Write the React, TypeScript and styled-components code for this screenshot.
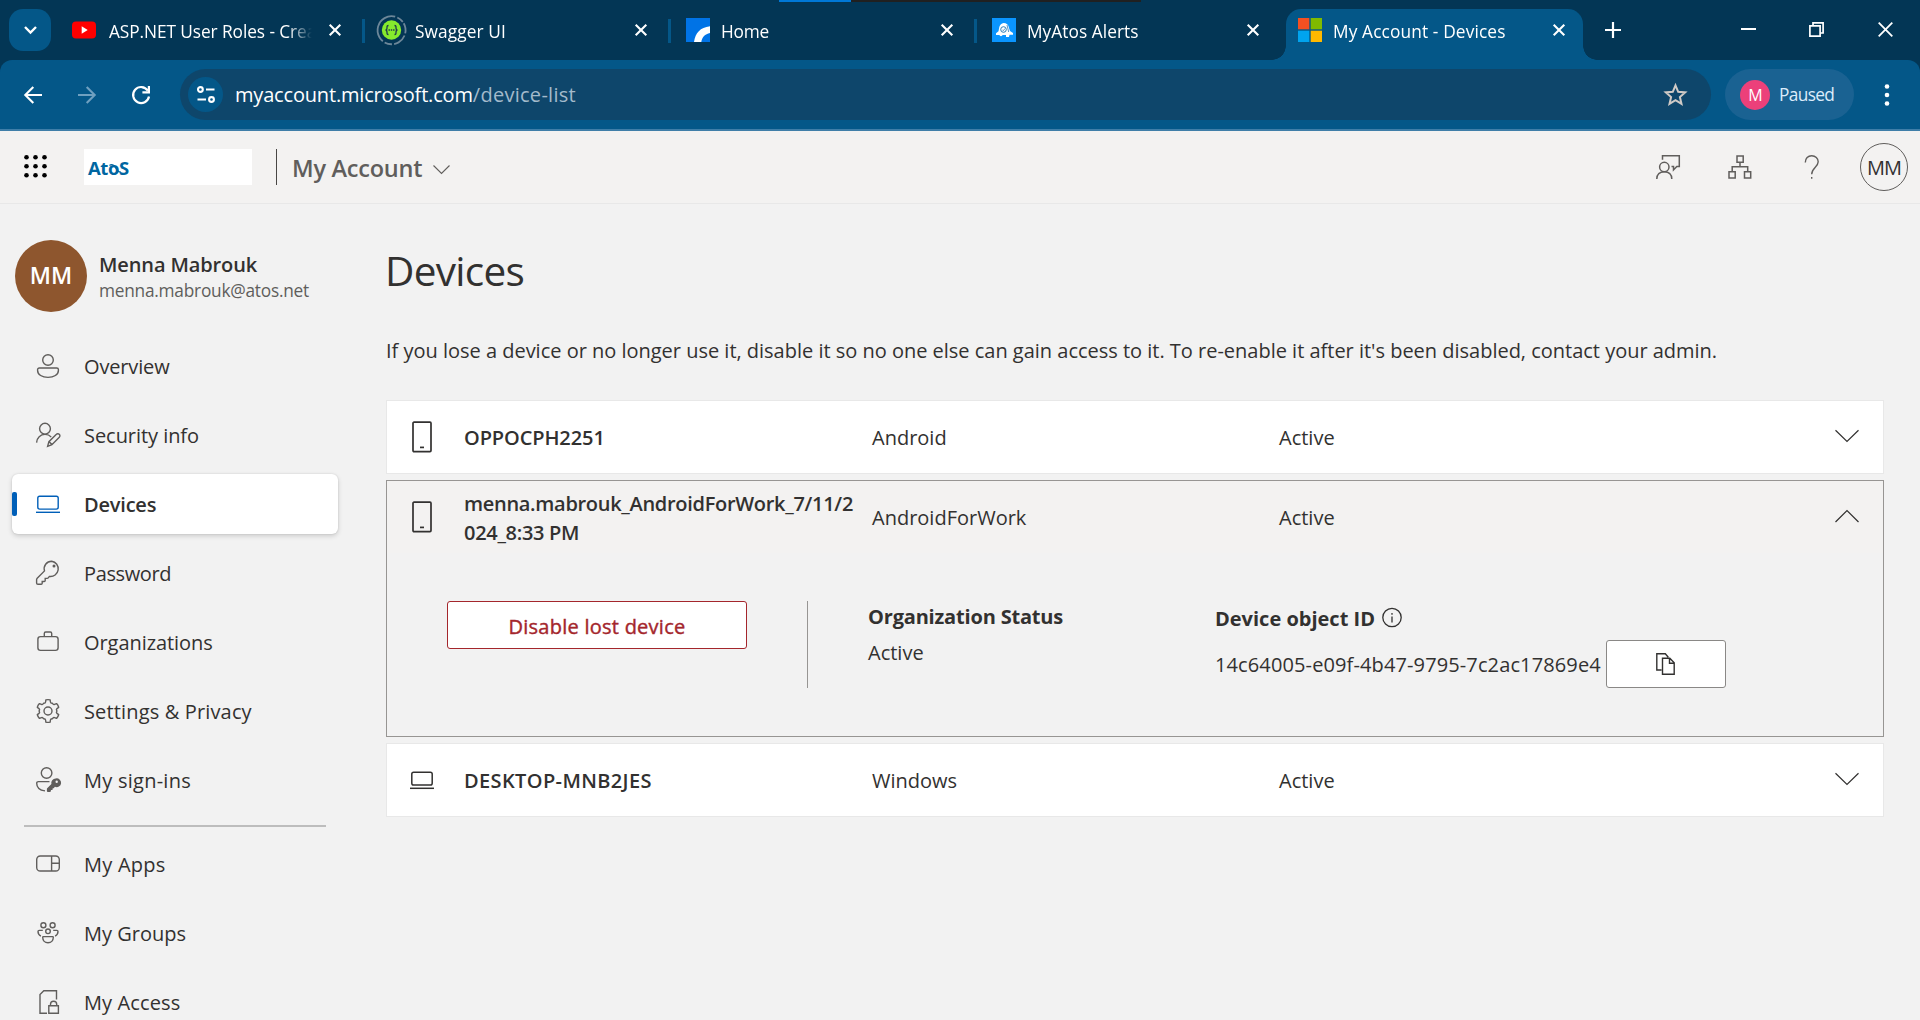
import React from "react";
import styled, { createGlobalStyle, css } from "styled-components";

const Global = createGlobalStyle`
  *, *::before, *::after { box-sizing: border-box; }
  html, body { margin: 0; padding: 0; background: #f2f2f2; }
  body { font-family: "Open Sans", "Noto Sans", sans-serif; overflow: hidden; }
  button { font-family: inherit; padding: 0; border: 0; background: none; color: inherit; }
  svg { display: block; flex: none; overflow: visible; }
`;

const c = {
  strip: "#033655",
  bar: "#045788",
  field: "#0e466b",
  text: "#323130",
  muted: "#605e5c",
  page: "#f2f2f2",
  warm: "#f3f2f1",
  line: "#979593",
  danger: "#a4262c",
  accent: "#005fb8",
};

const Screen = styled.div`
  width: 1920px;
  height: 1020px;
  overflow: hidden;
  display: flex;
  flex-direction: column;
  background: ${c.page};
  color: ${c.text};
  font-size: 20px;
`;

/* ---------- tab strip ---------- */
const TabStrip = styled.div`
  position: relative;
  display: flex;
  height: 60px;
  flex: none;
  padding: 9px 0 0 9px;
  background: ${c.strip};
  color: #fff;
`;
const CaptureBar = styled.div`
  position: absolute;
  top: 0;
  left: 779px;
  width: 362px;
  height: 2px;
  background: linear-gradient(90deg, #0078d7 72px, #202020 72px);
`;
const TabSearch = styled.button`
  width: 42px;
  height: 42px;
  margin-right: 9px;
  border-radius: 14px;
  background: ${c.bar};
  display: grid;
  place-items: center;
`;
const Tab = styled.div`
  width: 306px;
  display: flex;
  padding-left: 2px;
`;
const flare = css`
  content: "";
  position: absolute;
  bottom: 0;
  width: 14px;
  height: 14px;
`;
const TabBody = styled.div<{ $active?: boolean }>`
  position: relative;
  width: 297px;
  height: 51px;
  padding: 0 18px 9px 12px;
  display: flex;
  align-items: center;
  ${(p) =>
    p.$active &&
    css`
      background: ${c.bar};
      border-radius: 15px 15px 0 0;
      &::before {
        ${flare}
        left: -14px;
        background: radial-gradient(circle at 0 0, transparent 13.5px, ${c.bar} 14px);
      }
      &::after {
        ${flare}
        right: -14px;
        background: radial-gradient(circle at 100% 0, transparent 13.5px, ${c.bar} 14px);
      }
    `}
`;
const TabIcon = styled.span`
  width: 24px;
  height: 24px;
  margin-right: 11px;
  flex: none;
  display: flex;
  align-items: center;
  justify-content: center;
`;
const TabTitle = styled.span<{ $ls: number }>`
  flex: 1;
  min-width: 0;
  overflow: hidden;
  white-space: nowrap;
  padding-top: 3px;
  margin-right: 17px;
  font-size: 17.3px;
  line-height: 26px;
  letter-spacing: ${(p) => p.$ls}px;
  mask-image: linear-gradient(90deg, #000 calc(100% - 24px), transparent);
`;
const TabDivider = styled.i`
  width: 3px;
  height: 24px;
  margin: 10px 0 0 3px;
  background: ${c.bar};
`;
const NewTab = styled.button`
  width: 37px;
  height: 42px;
  margin-left: 4px;
  display: grid;
  place-items: center;
`;
const WindowControls = styled.div`
  display: flex;
  margin-left: auto;
  height: 42px;
`;
const WindowButton = styled.button`
  width: 68.5px;
  height: 41px;
  display: grid;
  place-items: center;
`;

/* ---------- address bar ---------- */
const ToolbarBack = styled.div`
  flex: none;
  background: ${c.strip};
`;
const Toolbar = styled.div`
  height: 71px;
  border-bottom: 2px solid #3f7ea8;
  border-radius: 12px 12px 0 0;
  background: ${c.bar};
  display: flex;
  align-items: center;
  padding-left: 6px;
  color: #fff;
`;
const NavButton = styled.button<{ $dim?: boolean }>`
  width: 54px;
  height: 48px;
  display: grid;
  place-items: center;
  color: ${(p) => (p.$dim ? "#6fa0c0" : "#fff")};
`;
const AddressField = styled.div`
  width: 1531px;
  height: 51px;
  margin-left: 12px;
  border-radius: 26px;
  background: ${c.field};
  display: flex;
  align-items: center;
  padding: 0 24px 0 8px;
`;
const SiteInfo = styled.span`
  width: 35px;
  height: 35px;
  margin-right: 12px;
  border-radius: 50%;
  background: ${c.bar};
  display: grid;
  place-items: center;
`;
const Url = styled.span`
  flex: 1;
  letter-spacing: -0.18px;
  line-height: 28px;
`;
const UrlPath = styled.span`
  color: #a3bacb;
  letter-spacing: 0.28px;
`;
const ProfileChip = styled.div`
  width: 129px;
  height: 51px;
  margin-left: 14px;
  padding-left: 15px;
  border-radius: 26px;
  background: #1a6292;
  display: flex;
  align-items: center;
  gap: 9px;
  font-size: 17.3px;
  letter-spacing: -0.65px;
  color: #dcecfb;
`;
const ProfileBadge = styled.span`
  width: 30px;
  height: 30px;
  border-radius: 50%;
  background: #ec407a;
  color: #fff;
  font-size: 16px;
  line-height: 30px;
  text-align: center;
`;
const MenuButton = styled.button`
  width: 66px;
  height: 48px;
  display: grid;
  place-items: center;
`;

/* ---------- site header ---------- */
const Header = styled.header`
  height: 73px;
  flex: none;
  display: flex;
  align-items: center;
  padding: 0 12px 0 24px;
  background: ${c.warm};
  border-bottom: 1px solid #e8e8e8;
`;
const LogoBox = styled.div`
  width: 168px;
  height: 36px;
  margin: 0 24px 0 37px;
  padding-left: 4px;
  background: #fff;
  color: #0066a1;
  font-size: 18.5px;
  line-height: 37px;
  font-weight: 700;
  display: flex;
  align-items: center;
`;
const Wordmark = styled.span`
  position: relative;
  letter-spacing: -0.4px;
  svg {
    position: absolute;
    left: 20px;
    top: 13px;
  }
`;
const HeaderRule = styled.i`
  width: 1px;
  height: 36px;
  background: #484644;
`;
const SiteName = styled.span`
  margin: 0 11px 0 15px;
  padding-top: 2px;
  font-size: 23.5px;
  font-weight: 600;
  letter-spacing: -0.25px;
  color: ${c.muted};
`;
const SwitcherChevron = styled.span`
  padding-top: 4px;
  color: ${c.muted};
`;
const HeaderActions = styled.div`
  margin-left: auto;
  display: flex;
  align-items: center;
  color: ${c.muted};
`;
const HeaderAction = styled.button`
  width: 72px;
  height: 48px;
  padding-right: 1px;
  display: grid;
  place-items: center;
`;
const Persona = styled.span`
  width: 48px;
  height: 48px;
  margin-left: 12px;
  border: 1px solid #605e5c;
  border-radius: 50%;
  text-align: center;
  line-height: 48px;
  font-size: 20px;
  letter-spacing: -0.9px;
  color: ${c.text};
`;

/* ---------- sidebar ---------- */
const Body = styled.div`
  flex: 1;
  min-height: 0;
  display: flex;
`;
const Sidebar = styled.aside`
  width: 350px;
  flex: none;
  padding: 36px 12px 0;
  overflow: hidden;
`;
const UserCard = styled.div`
  display: flex;
  align-items: center;
  gap: 12px;
  height: 72px;
  padding-left: 3px;
  margin-bottom: 24px;
`;
const UserAvatar = styled.span`
  width: 72px;
  height: 72px;
  border-radius: 50%;
  background: #8e562e;
  color: #fff;
  font-size: 23px;
  font-weight: 600;
  line-height: 71px;
  text-align: center;
`;
const UserText = styled.div`
  padding-top: 2px;
`;
const UserName = styled.div`
  font-weight: 600;
  line-height: 28px;
  letter-spacing: -0.12px;
`;
const UserMail = styled.div`
  font-size: 17.3px;
  line-height: 24px;
  letter-spacing: -0.24px;
  color: ${c.muted};
`;
const NavList = styled.nav`
  display: flex;
  flex-direction: column;
  gap: 9px;
`;
const NavItem = styled.a<{ $active?: boolean; $ls: number }>`
  position: relative;
  height: 60px;
  flex: none;
  display: flex;
  align-items: center;
  gap: 24px;
  padding-left: 24px;
  letter-spacing: ${(p) => p.$ls}px;
  svg { color: ${c.muted}; }
  ${(p) =>
    p.$active &&
    css`
      background: #fff;
      border-radius: 6px;
      box-shadow: 0 2px 5px rgba(0, 0, 0, 0.16), 0 0 2px rgba(0, 0, 0, 0.12);
      font-weight: 600;
      svg { color: ${c.accent}; }
      &::before {
        content: "";
        position: absolute;
        left: 0;
        top: 18px;
        width: 5px;
        height: 24px;
        border-radius: 2px;
        background: ${c.accent};
      }
    `}
`;
const NavDivider = styled.hr`
  width: 302px;
  height: 2px;
  margin: 15px 12px 7px;
  border: 0;
  background: #bdbdbd;
`;

/* ---------- devices ---------- */
const Main = styled.main`
  flex: 1;
  padding: 39px 36px 0;
`;
const Title = styled.h1`
  margin: 0 0 38px;
  font-size: 40.5px;
  line-height: 56px;
  font-weight: 400;
  letter-spacing: -0.7px;
  text-indent: -1px;
`;
const Lead = styled.p`
  margin: 0 0 35px;
  line-height: 28px;
  letter-spacing: -0.012px;
  white-space: nowrap;
`;
const DeviceList = styled.div`
  display: flex;
  flex-direction: column;
  gap: 6px;
`;
const DeviceCard = styled.section<{ $open?: boolean }>`
  height: ${(p) => (p.$open ? 257 : 74)}px;
  border: 1px solid ${(p) => (p.$open ? c.line : "#e8e8e8")};
  background: ${(p) => (p.$open ? c.page : "#fff")};
`;
const DeviceHead = styled.div<{ $open?: boolean }>`
  height: 72px;
  display: grid;
  grid-template-columns: 70px 415px 407px 1fr;
  align-items: center;
  background: ${(p) => (p.$open ? c.warm : "transparent")};
`;
const DeviceIcon = styled.span`
  display: grid;
  place-items: center;
  padding-bottom: 1px;
`;
const DeviceName = styled.span<{ $ls: number; $wrapped?: boolean }>`
  padding: ${(p) => (p.$wrapped ? 2 : 0)}px 13px 0 7px;
  font-weight: 600;
  line-height: 29px;
  word-break: break-all;
  letter-spacing: ${(p) => p.$ls}px;
`;
const StatusCell = styled.span`
  display: flex;
  align-items: center;
  justify-content: space-between;
  padding-right: 24px;
  svg { margin-bottom: 3px; }
`;
const DeviceBody = styled.div`
  display: flex;
  padding: 48px 0 0 60px;
`;
const DisableButton = styled.button`
  width: 300px;
  height: 48px;
  padding-top: 2px;
  border: 1px solid ${c.danger};
  border-radius: 3px;
  background: #fff;
  color: ${c.danger};
  font-size: 20px;
  letter-spacing: 0.25px;
  -webkit-text-stroke: 0.4px ${c.danger};
`;
const BodyRule = styled.i`
  width: 1px;
  height: 87px;
  margin: 0 60px;
  background: ${c.line};
`;
const StatusColumn = styled.div`
  width: 347px;
  padding-top: 2px;
  display: flex;
  flex-direction: column;
  gap: 8px;
  line-height: 28px;
`;
const IdColumn = styled(StatusColumn)`
  width: 520px;
  padding-top: 4px;
  gap: 7px;
`;
const FieldLabel = styled.span<{ $ls?: number }>`
  display: flex;
  align-items: center;
  gap: 7px;
  font-weight: 700;
  letter-spacing: ${(p) => p.$ls ?? 0}px;
`;
const IdValue = styled.span`
  display: flex;
  align-items: center;
  gap: 5px;
  letter-spacing: 0.12px;
`;
const IdText = styled.span`
  padding-top: 1px;
`;
const CopyButton = styled.button`
  width: 120px;
  height: 48px;
  border: 1px solid #8a8886;
  border-radius: 3px;
  background: #fff;
  display: grid;
  place-items: center;
`;

/* ---------- icons ---------- */
const Icon = ({ w = 24, h = w, sw = 1.4, children }: { w?: number; h?: number; sw?: number; children: React.ReactNode }) => (
  <svg width={w} height={h} viewBox={`0 0 ${w} ${h}`} fill="none" stroke="currentColor" strokeWidth={sw}>
    {children}
  </svg>
);

const CloseX = ({ size = 12, sw = 2.1 }: { size?: number; sw?: number }) => (
  <Icon w={size} sw={sw}><path d={`M.7 .7L${size - 0.7} ${size - 0.7}M${size - 0.7} .7L.7 ${size - 0.7}`} /></Icon>
);

const YouTubeIcon = () => (
  <svg width="28" height="18" viewBox="0 0 28 18">
    <rect x="0" y="0.5" width="24" height="17" rx="4" fill="#f00" />
    <path d="M9.7 5.3v7.4l6-3.7z" fill="#fff" />
  </svg>
);
const SwaggerIcon = () => (
  <svg width="30" height="30" viewBox="0 0 30 30" fill="none">
    <circle cx="14.500" cy="15" r="14" stroke="#6d8799" strokeWidth="1.8" strokeDasharray="10.4 2.2 14 2.2 7.5 2.2 38 2.2 7 2.2" transform="rotate(-30 15 15)" />
    <circle cx="14.500" cy="15" r="9.700" fill="#85ea2d" />
    <path d="M11.500 10.500c-1.600 0-1.500 1-1.500 2.200 0 1.300-.3 2.300-1.500 2.300 1.200 0 1.500 1 1.500 2.300 0 1.200-.1 2.200 1.500 2.200M17.500 10.500c1.600 0 1.500 1 1.500 2.200 0 1.300.3 2.300 1.500 2.300-1.200 0-1.500 1-1.500 2.300 0 1.200.1 2.200-1.500 2.200M11.500 15h1.400M13.800 15h1.400M16.100 15h1.400" stroke="#1d3b4a" strokeWidth="1.300" />
  </svg>
);
const HomeIcon = () => (
  <svg width="24" height="24" viewBox="0 0 24 24">
    <rect width="24" height="24" fill="#0073e6" />
    <path d="M8 24C9.500 15 14 9.500 24 8.300V15c-5 1-8 4-8.700 9z" fill="#fff" />
  </svg>
);
const AlertIcon = () => (
  <svg width="24" height="24" viewBox="0 0 24 24">
    <rect width="24" height="24" fill="#0a95ff" />
    <path d="M11.500 5c3 0 5 1.500 5.500 5l1 3 3 2v1.800h-3.500L17 19h-3v-2h-3.500c-.2 1.500-2.800 1.500-3 0H4v-1.700l2.500-2L7.300 9C8 6.500 9.500 5.500 11.500 5z" fill="#fff" />
    <circle cx="11.500" cy="11.500" r="2.800" fill="none" stroke="#2b7bb5" strokeWidth="1" />
    <path d="M10.300 11.700l1 1 1.700-2.200M15 7l1.700 7" fill="none" stroke="#2b7bb5" strokeWidth=".8" />
  </svg>
);
const MicrosoftIcon = () => (
  <svg width="24" height="24" viewBox="0 0 24 24">
    <path d="M0 0h11.300v11.300H0z" fill="#f25022" />
    <path d="M12.700 0H24v11.300H12.700z" fill="#7fba00" />
    <path d="M0 12.700h11.300V24H0z" fill="#00a4ef" />
    <path d="M12.700 12.700H24V24H12.700z" fill="#ffb900" />
  </svg>
);

const PersonIcon = () => (
  <Icon><circle cx="12" cy="6" r="5.300" /><path d="M3.300 14h17.400c1 0 1.700.7 1.700 1.600v.8c0 4.200-4.600 7-10.400 7S1.600 20.600 1.600 16.400v-.8c0-.9.7-1.600 1.700-1.600z" /></Icon>
);
const PersonEditIcon = () => (
  <Icon><circle cx="9" cy="5.700" r="5.400" /><path d="M.6 19.600C.8 14.700 4.500 11.400 9 11.400c2.500 0 4.700.9 6.200 2.500M11.600 23.400l1.300-4.700 7.500-7.400a2 2 0 0 1 2.900 0 2 2 0 0 1 0 2.900l-7.400 7.500zM13.200 18.800l2.700 2.800" /></Icon>
);
const LaptopIcon = ({ sw }: { sw?: number }) => (
  <Icon sw={sw}><rect x="1.800" y="4.300" width="20.400" height="12.800" rx="1.800" /><path d="M0 20.300h24" /></Icon>
);
const KeyIcon = () => (
  <Icon>
    <path d="M15.700.2a7.500 7.500 0 0 0-7.200 9.700L1.200 17.300c-.4.400-.6.900-.6 1.400v3.200c0 .8.600 1.400 1.400 1.400h3.200c.6 0 1-.5 1-1.100v-1.700h2c.6 0 1-.5 1-1.100v-2h2c.4 0 .8-.2 1-.5l1.200-1.500A7.600 7.600 0 1 0 15.700.2z" />
    <circle cx="18" cy="5" r="1.500" fill="currentColor" stroke="none" />
  </Icon>
);
const BriefcaseIcon = () => (
  <Icon><rect x="1.900" y="6.600" width="20.200" height="13.800" rx="2.600" /><path d="M8.300 6.500V3.400c0-.8.6-1.400 1.400-1.400h4.600c.8 0 1.400.6 1.400 1.400v3.100" /></Icon>
);
/* six-toothed outline built from polar points around the icon centre */
const gearPath = (() => {
  const pt = (deg: number, r: number) => {
    const a = ((deg - 90) * Math.PI) / 180;
    return `${(12 + r * Math.cos(a)).toFixed(2)} ${(12 + r * Math.sin(a)).toFixed(2)}`;
  };
  let d = "";
  for (let k = 0; k < 6; k++) {
    const b = k * 60;
    d += `${k ? "L" : "M"}${pt(b - 11, 11.3)}Q${pt(b, 11.6)} ${pt(b + 11, 11.3)}L${pt(b + 15, 9.3)}Q${pt(b + 19, 8)} ${pt(b + 30, 8.9)}Q${pt(b + 41, 8)} ${pt(b + 45, 9.3)}`;
  }
  return d + "Z";
})();
const GearIcon = () => (
  <Icon><path d={gearPath} strokeLinejoin="round" /><circle cx="12" cy="12" r="4" /></Icon>
);
const PersonKeyIcon = () => (
  <Icon>
    <circle cx="10.600" cy="5" r="5.300" />
    <path d="M13.500 13.600H2.400c-1 0-1.700.7-1.700 1.700 0 4.200 3.300 7 8.300 7.600" />
    <path d="M19.700 10.500a4.400 4.400 0 0 0-4.300 5.500l-4.200 4.200c-.2.200-.3.400-.3.700v2.100c0 .5.400.9.900.9h2.300c.5 0 .8-.3.800-.8v-1h1c.5 0 .8-.3.800-.8v-1h1l1.200-1.500a4.400 4.400 0 1 0 .8-8.300zm1 2.100a1.200 1.200 0 1 1 0 2.400 1.200 1.200 0 0 1 0-2.400z" fill="currentColor" stroke="none" />
  </Icon>
);
const AppsIcon = () => (
  <Icon><rect x=".7" y="4" width="22.600" height="15" rx="3.600" /><path d="M15.600 4v15M15.600 11.300h7.700" /></Icon>
);
const GroupsIcon = () => (
  <Icon>
    <circle cx="7.400" cy="4.300" r="2.500" /><circle cx="16.600" cy="4.300" r="2.500" /><circle cx="12" cy="10.300" r="2.300" />
    <path d="M7.300 15.600h9.400c.4 0 .6.300.6.600 0 3.300-2.200 5.600-5.300 5.600s-5.300-2.300-5.300-5.600c0-.3.200-.6.600-.6zM6.800 9.400H3.200c-.7 0-1.200.5-1.200 1.200 0 2 1 3.600 2.900 4.500M17.200 9.400h3.600c.7 0 1.200.5 1.200 1.200 0 2-1 3.600-2.900 4.500" />
  </Icon>
);
const AccessIcon = () => (
  <Icon><path d="M11 23.300H4V4.500L7.800.8h12.700v8.800M12.800 15.800h9.600v7.500h-9.600zM14.500 15.600v-1.300a3.100 3.100 0 0 1 6.200 0v1.300" /></Icon>
);
const PhoneIcon = () => (
  <Icon w={20} h={32} sw={1.7}><rect x="1" y="1.200" width="18" height="29.400" rx="1" /><path d="M8 26.400h4" /></Icon>
);
const Chevron = ({ up, w = 24 }: { up?: boolean; w?: number }) => {
  const h = w / 2;
  return <Icon w={w} h={h} sw={1.2}><path d={up ? `M.5 ${h}L${w / 2} .6L${w - 0.5} ${h}` : `M.5 .2L${w / 2} ${h - 0.5}L${w - 0.5} .2`} /></Icon>;
};

const tabs = [
  { title: "ASP.NET User Roles - Create", icon: <YouTubeIcon />, ls: -0.08 },
  { title: "Swagger UI", icon: <SwaggerIcon />, ls: 0.1 },
  { title: "Home", icon: <HomeIcon />, ls: -0.2 },
  { title: "MyAtos Alerts", icon: <AlertIcon />, ls: 0.05 },
  { title: "My Account - Devices", icon: <MicrosoftIcon />, ls: 0.13, active: true },
];

const primaryNav = [
  { label: "Overview", icon: <PersonIcon />, ls: -0.15 },
  { label: "Security info", icon: <PersonEditIcon />, ls: -0.05 },
  { label: "Devices", icon: <LaptopIcon />, ls: -0.2, active: true },
  { label: "Password", icon: <KeyIcon />, ls: -0.38 },
  { label: "Organizations", icon: <BriefcaseIcon />, ls: -0.06 },
  { label: "Settings & Privacy", icon: <GearIcon />, ls: 0.15 },
  { label: "My sign-ins", icon: <PersonKeyIcon />, ls: 0.25 },
];
const secondaryNav = [
  { label: "My Apps", icon: <AppsIcon />, ls: 0.25 },
  { label: "My Groups", icon: <GroupsIcon />, ls: 0 },
  { label: "My Access", icon: <AccessIcon />, ls: 0.12 },
];

const dots = [0, 1, 2];

function DeviceRow({ icon, name, ls, os, open }: { icon: React.ReactNode; name: string; ls: number; os: string; open?: boolean }) {
  return (
    <DeviceHead $open={open}>
      <DeviceIcon>{icon}</DeviceIcon>
      <DeviceName $ls={ls} $wrapped={open}>{name}</DeviceName>
      <span>{os}</span>
      <StatusCell>Active<Chevron up={open} /></StatusCell>
    </DeviceHead>
  );
}

export default function App() {
  return (
    <Screen>
      <Global />
      <TabStrip>
        <CaptureBar />
        <TabSearch><Icon w={13} h={8} sw={2.400}><path d="M1 1l5.500 5.500L12 1" /></Icon></TabSearch>
        {tabs.map((t, i) => (
          <Tab key={t.title}>
            <TabBody $active={t.active}>
              <TabIcon>{t.icon}</TabIcon>
              <TabTitle $ls={t.ls}>{t.title}</TabTitle>
              <CloseX />
            </TabBody>
            {i < 3 && <TabDivider />}
          </Tab>
        ))}
        <NewTab><Icon w={16} sw={2.200}><path d="M8 0v16M0 8h16" /></Icon></NewTab>
        <WindowControls>
          <WindowButton><Icon w={15} h={3} sw={2}><path d="M0 1h15" /></Icon></WindowButton>
          <WindowButton><Icon w={16} h={15} sw={1.700}><path d="M.9 3.900h10.200v10.200H.9zM4 3.500V.9h10.100V11H11.500" /></Icon></WindowButton>
          <WindowButton><CloseX size={15} sw={1.800} /></WindowButton>
        </WindowControls>
      </TabStrip>

      <ToolbarBack>
        <Toolbar>
          <NavButton><Icon w={18} sw={2.100}><path d="M18 9H1.500M9.300 1L1.300 9l8 8" /></Icon></NavButton>
          <NavButton $dim><Icon w={18} sw={2.100}><path d="M0 9h16.500M8.700 1l8 8-8 8" /></Icon></NavButton>
          <NavButton><Icon w={18} sw={2.200}><path d="M15.800 4.600A8 8 0 1 0 17 10.500M16.900 0v6.400h-6.500" /></Icon></NavButton>
          <AddressField>
            <SiteInfo>
              <Icon w={18} h={17} sw={2.100}><circle cx="3.400" cy="3.500" r="2.400" /><path d="M9 3.500h8.500M.5 13.500H9" /><circle cx="14.500" cy="13.500" r="2.400" /></Icon>
            </SiteInfo>
            <Url>myaccount.microsoft.com<UrlPath>/device-list</UrlPath></Url>
            <Icon w={23} h={22} sw={2}>
              <path d="M11.500 1.300l2.700 6.500 7 .6-5.300 4.600 1.600 6.900-6-3.700-6 3.700 1.600-6.900-5.300-4.600 7-.6z" stroke="#cfcac6" />
            </Icon>
          </AddressField>
          <ProfileChip><ProfileBadge>M</ProfileBadge>Paused</ProfileChip>
          <MenuButton>
            <svg width="6" height="26" viewBox="0 0 6 26" fill="#fff"><circle cx="3" cy="4.500" r="2.300" /><circle cx="3" cy="13" r="2.300" /><circle cx="3" cy="21.500" r="2.300" /></svg>
          </MenuButton>
        </Toolbar>
      </ToolbarBack>

      <Header>
        <svg width="23" height="24" viewBox="0 0 23 24" fill="#000">
          {dots.map((r) => dots.map((k) => <circle key={`${r}${k}`} cx={2.5 + k * 9} cy={2.300 + r * 9} r="2.300" />))}
        </svg>
        <LogoBox>
          <Wordmark>
            AtoS
            <Icon w={14} h={13} sw={1.300}><path d="M1.500 3.500C3.500 1.500 6 3 7.500 5.500s2.500 5 5.500 4.500" /></Icon>
          </Wordmark>
        </LogoBox>
        <HeaderRule />
        <SiteName>My Account</SiteName>
        <SwitcherChevron><Icon w={17} h={9} sw={1.100}><path d="M.5 .5l8 8 8-8" /></Icon></SwitcherChevron>
        <HeaderActions>
          <HeaderAction>
            <Icon sw={1.500}><circle cx="8.300" cy="12" r="4.700" /><path d="M.8 24c0-4.600 3-7.300 7.500-7.300s7.500 2.700 7.500 7.300M6.500 4.800V.8h16.800v10.800h-2.500L17.500 15v-3.400h-2" /></Icon>
          </HeaderAction>
          <HeaderAction>
            <Icon sw={1.500}><path d="M9 1h6.200v6.200H9zM1 16.700h6.200v6.200H1zM16.500 16.700h6.200v6.200h-6.200zM12 7.200v4.300M4.200 16.700v-5h15.500v5" /></Icon>
          </HeaderAction>
          <HeaderAction>
            <Icon w={16} h={24} sw={1.400}><path d="M1.300 7.500C1.300 3.300 4 .8 7.700.8s6.500 2.500 6.500 6c0 5-6.500 6-6.500 12.500" /><path d="M7.700 22v1.700" /></Icon>
          </HeaderAction>
          <Persona>MM</Persona>
        </HeaderActions>
      </Header>

      <Body>
        <Sidebar>
          <UserCard>
            <UserAvatar>MM</UserAvatar>
            <UserText>
              <UserName>Menna Mabrouk</UserName>
              <UserMail>menna.mabrouk@atos.net</UserMail>
            </UserText>
          </UserCard>
          <NavList>
            {primaryNav.map((n) => (
              <NavItem key={n.label} $active={n.active} $ls={n.ls}>{n.icon}{n.label}</NavItem>
            ))}
          </NavList>
          <NavDivider />
          <NavList>
            {secondaryNav.map((n) => (
              <NavItem key={n.label} $ls={n.ls}>{n.icon}{n.label}</NavItem>
            ))}
          </NavList>
        </Sidebar>

        <Main>
          <Title>Devices</Title>
          <Lead>If you lose a device or no longer use it, disable it so no one else can gain access to it. To re-enable it after it's been disabled, contact your admin.</Lead>
          <DeviceList>
            <DeviceCard>
              <DeviceRow icon={<PhoneIcon />} name="OPPOCPH2251" ls={-0.1} os="Android" />
            </DeviceCard>
            <DeviceCard $open>
              <DeviceRow icon={<PhoneIcon />} name="menna.mabrouk_AndroidForWork_7/11/2024_8:33 PM" ls={-0.3} os="AndroidForWork" open />
              <DeviceBody>
                <DisableButton>Disable lost device</DisableButton>
                <BodyRule />
                <StatusColumn>
                  <FieldLabel $ls={-0.18}>Organization Status</FieldLabel>
                  <span>Active</span>
                </StatusColumn>
                <IdColumn>
                  <FieldLabel>
                    Device object ID
                    <Icon w={20} sw={1.300}><circle cx="10" cy="8.500" r="9.200" /><path d="M10 7.500v6M10 4v1.800" /></Icon>
                  </FieldLabel>
                  <IdValue>
                    <IdText>14c64005-e09f-4b47-9795-7c2ac17869e4</IdText>
                    <CopyButton>
                      <Icon w={19} h={22} sw={1.400}><path d="M5.500 17H.8V.8h8.500l3 3.500M6.500 5.300h7.300l4.400 4.500v11.500H6.500zM13.500 5.500v4.700h4.500" /></Icon>
                    </CopyButton>
                  </IdValue>
                </IdColumn>
              </DeviceBody>
            </DeviceCard>
            <DeviceCard>
              <DeviceRow icon={<LaptopIcon sw={1.5} />} name="DESKTOP-MNB2JES" ls={0.38} os="Windows" />
            </DeviceCard>
          </DeviceList>
        </Main>
      </Body>
    </Screen>
  );
}
